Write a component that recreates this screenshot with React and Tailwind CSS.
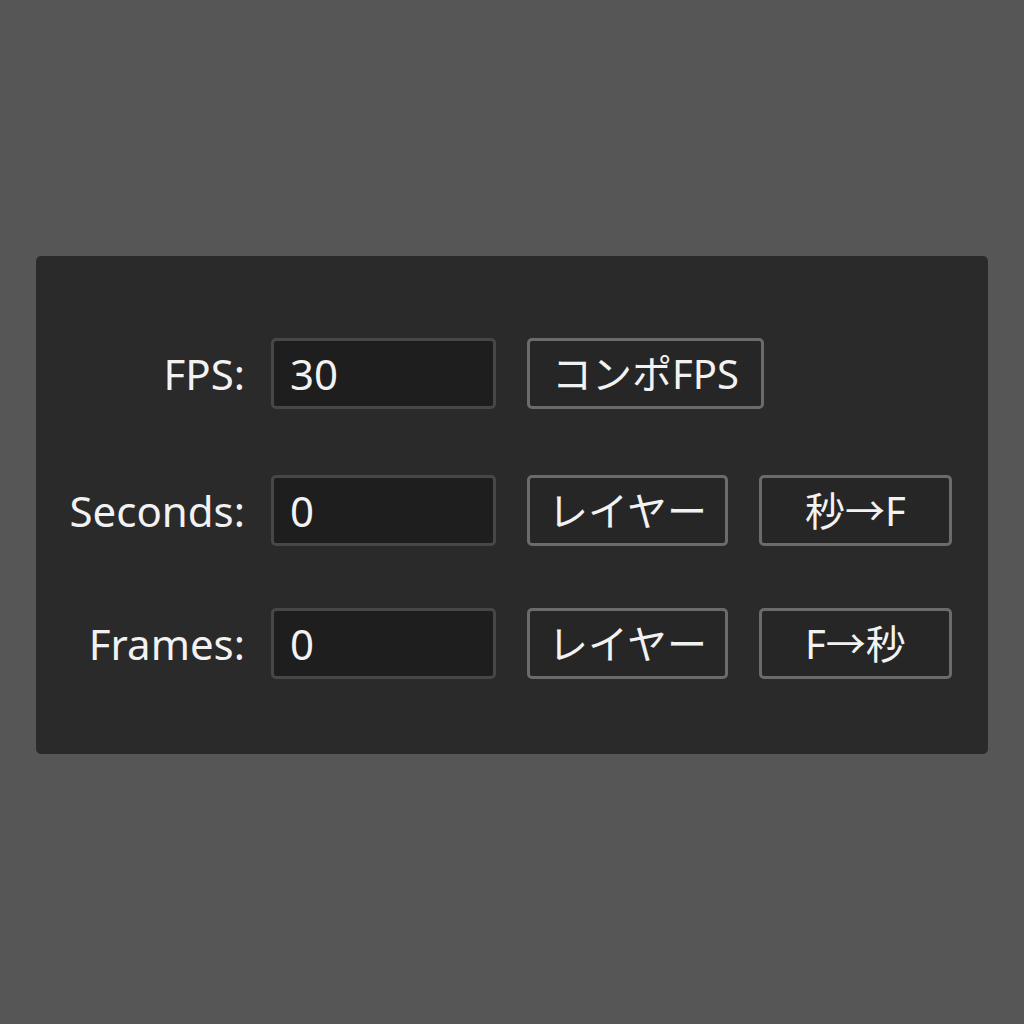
import React from 'react';

const rows = [
  { label: 'FPS:', value: '30', gap: 'mt-0', buttons: [{ text: 'コンポFPS', w: 'w-[237px]' }] },
  { label: 'Seconds:', value: '0', gap: 'mt-[66px]', buttons: [{ text: 'レイヤー', w: 'w-[201px]' }, { text: '秒→F', w: 'w-[193px]' }] },
  { label: 'Frames:', value: '0', gap: 'mt-[62px]', buttons: [{ text: 'レイヤー', w: 'w-[201px]' }, { text: 'F→秒', w: 'w-[193px]' }] },
];

export default function App() {
  return (
    <div
      className="w-[1024px] h-[1024px] bg-[#565656] pt-[256px] px-[36px] text-[#f2f2f2]"
      style={{ fontFamily: '"Noto Sans", "Noto Sans CJK JP", sans-serif' }}
    >
      <div className="w-[952px] h-[498px] bg-[#2a2a2a] rounded-[5px] pt-[82px] flex flex-col">
        {rows.map((r, i) => (
          <div key={i} className={`${r.gap} flex items-center h-[71px]`}>
            <span className="w-[209px] text-right text-[42px] leading-none">{r.label}</span>
            <div className="ml-[26px] w-[225px] h-[71px] bg-[#1e1e1e] border-[3px] border-[#474747] rounded-[5px] pl-[16px] flex items-center text-[42px] leading-none">
              {r.value}
            </div>
            <div className="ml-[31px] flex gap-[31px]">
              {r.buttons.map((b, j) => (
                <div
                  key={j}
                  className={`${b.w} h-[71px] border-[3px] border-[#6b6b6b] rounded-[5px] bg-[#262626] flex items-center justify-center text-[40px] leading-none`}
                >
                  {b.text}
                </div>
              ))}
            </div>
          </div>
        ))}
      </div>
    </div>
  );
}
